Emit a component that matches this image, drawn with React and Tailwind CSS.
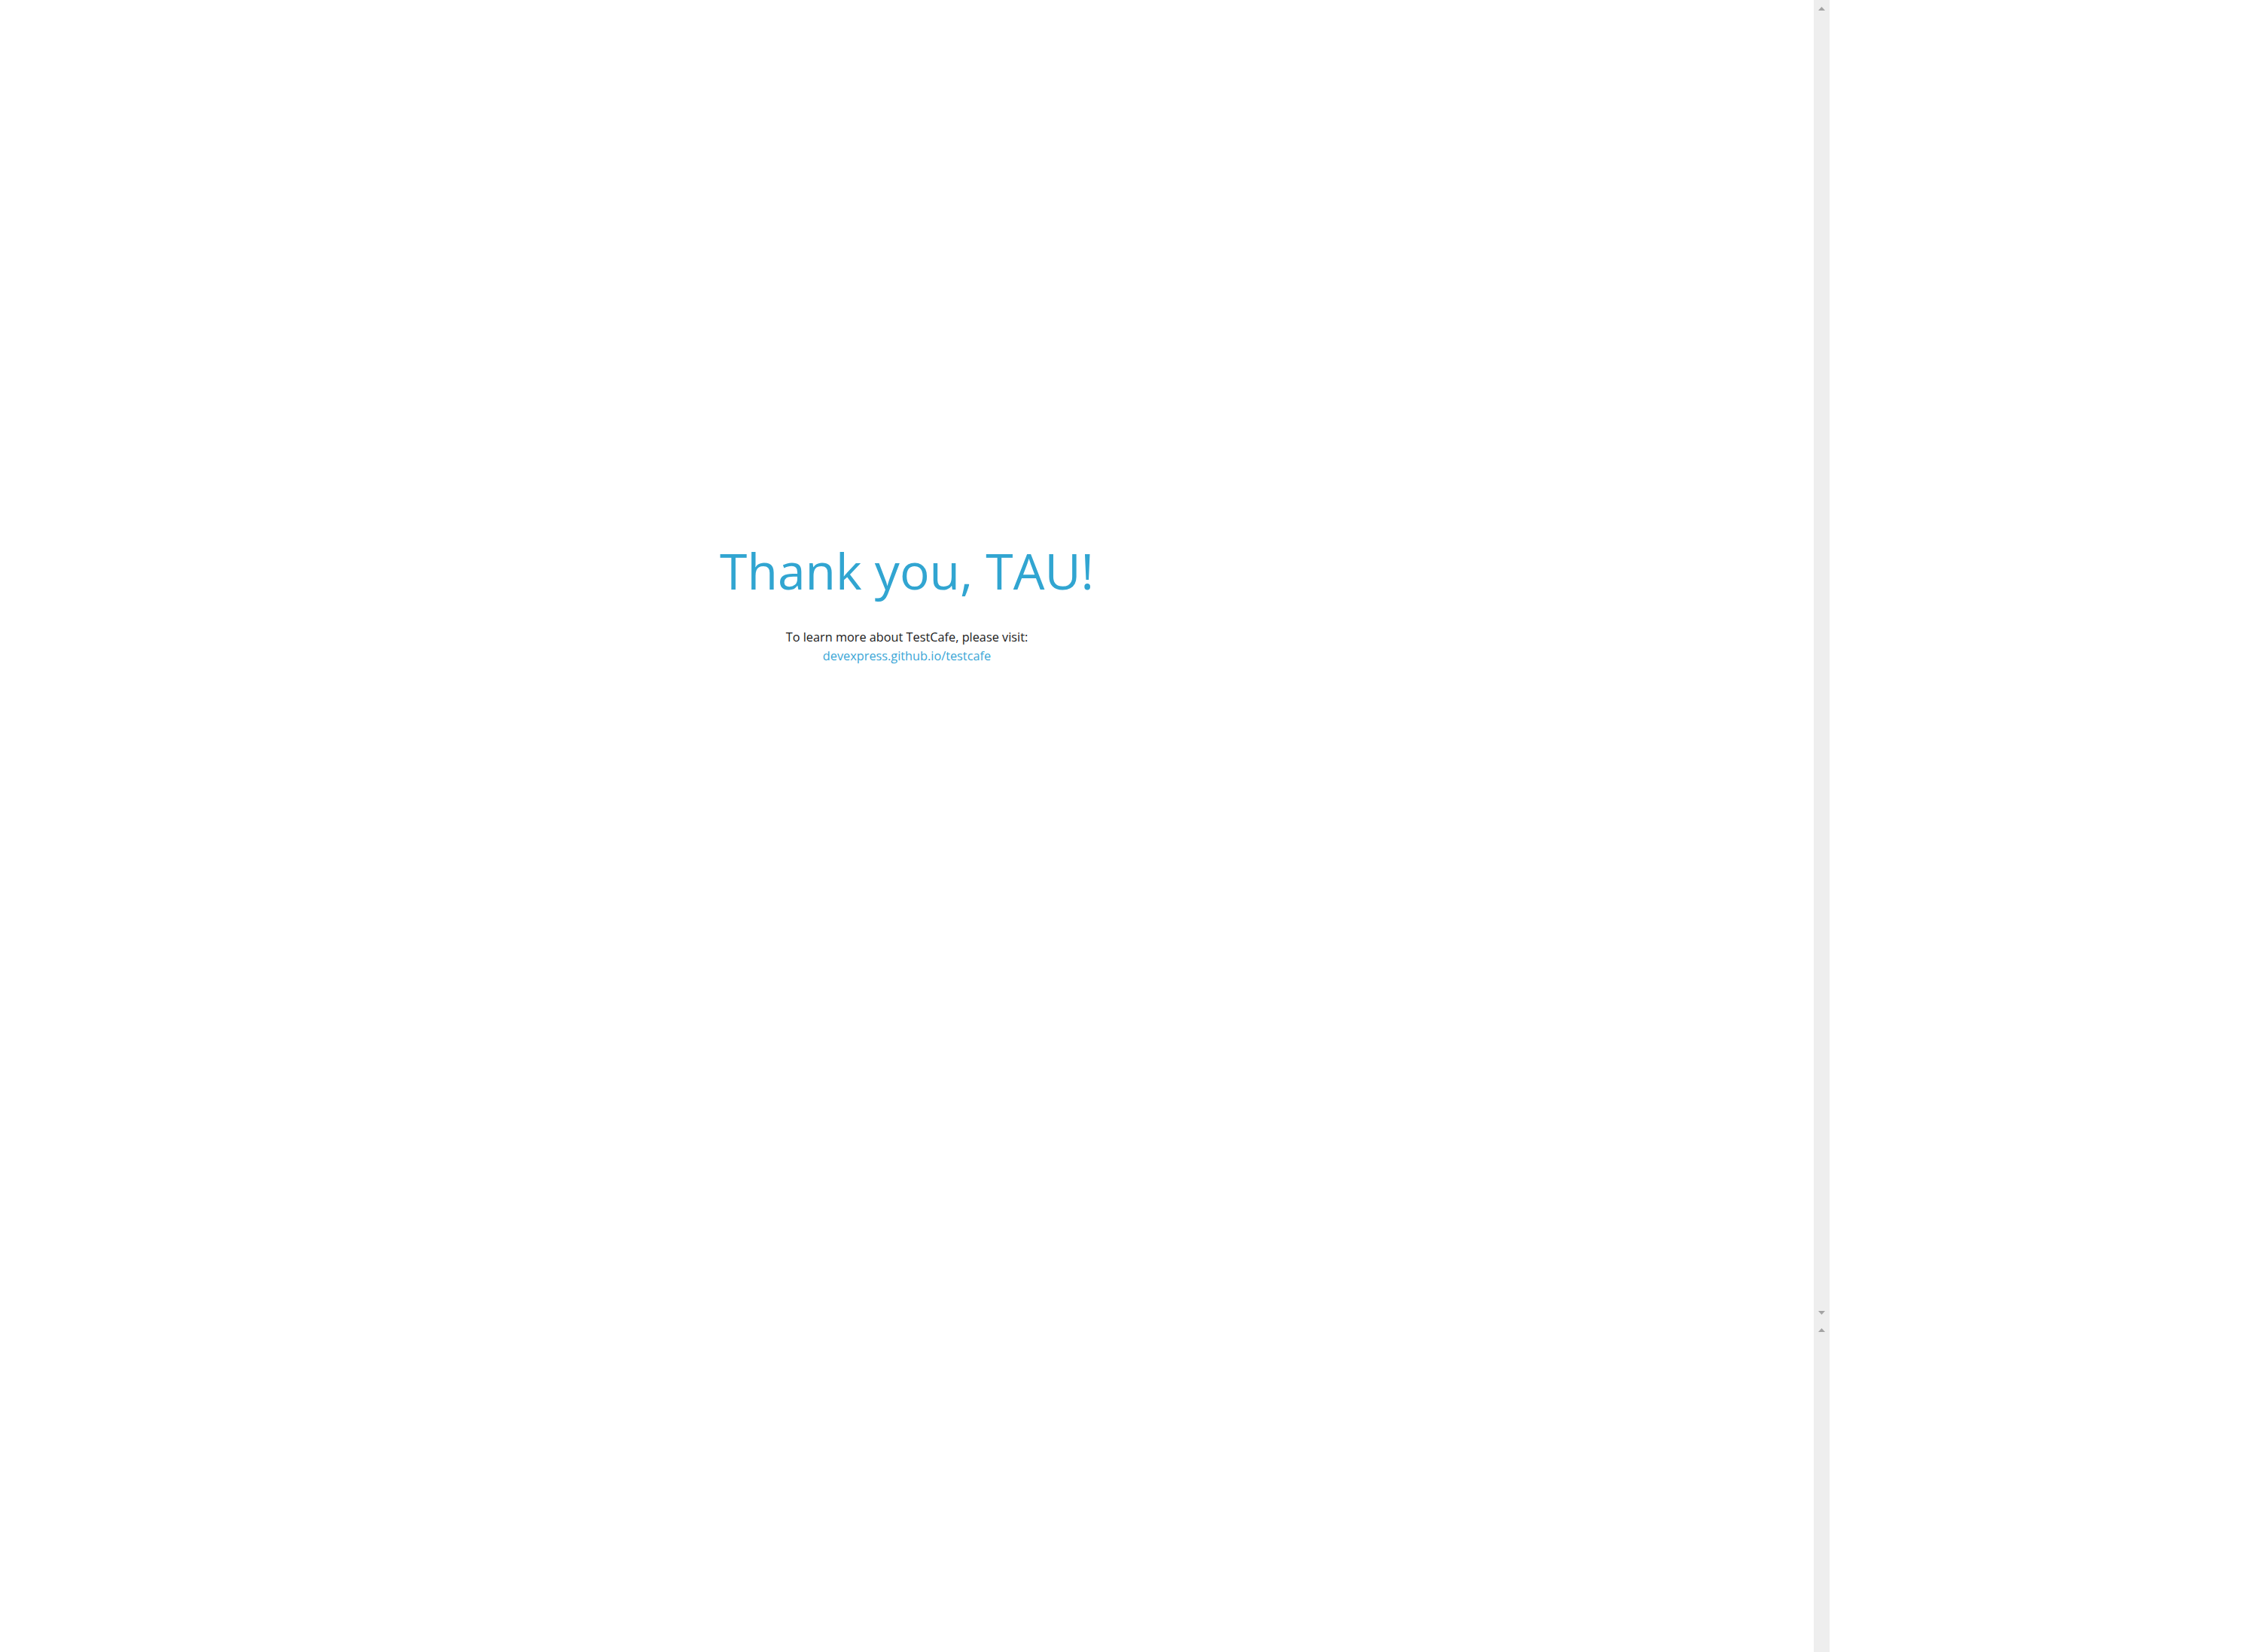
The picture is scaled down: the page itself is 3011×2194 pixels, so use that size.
const ArrowUp = () => (
  <svg width="9" height="5" viewBox="0 0 9 5" className="block">
    <polygon points="4.5,0 9,5 0,5" fill="#a3a3a3" />
  </svg>
);

const ArrowDown = () => (
  <svg width="9" height="5" viewBox="0 0 9 5" className="block">
    <polygon points="0,0 9,0 4.5,5" fill="#a3a3a3" />
  </svg>
);

const App = () => {
  return (
    <div className="flex h-[2194px] w-[3011px] overflow-hidden bg-white">
      <main
        className="flex w-[2409px] flex-col items-center pt-[713px]"
        style={{ fontFamily: '"Open Sans", "Noto Sans", sans-serif' }}
      >
        <h1 className="text-[66px] leading-[88px] font-normal text-[#31a5d1]">
          Thank you, TAU!
        </h1>
        <div className="mt-[33px] flex flex-col items-center text-[16.3px] leading-[25px]">
          <p className="text-[#1a1a1a]">
            To learn more about TestCafe, please visit:
          </p>
          <a href="#" className="text-[#3aa6d6] no-underline">
            devexpress.github.io/testcafe
          </a>
        </div>
      </main>

      {/* scrollbar strip */}
      <div className="flex h-full w-[21px] flex-col items-center bg-[#eeeeee] pt-[9px]">
        <ArrowUp />
        <div className="h-[1727px]" />
        <ArrowDown />
        <div className="h-[18px]" />
        <ArrowUp />
      </div>

      <div className="flex-1 bg-white" />
    </div>
  );
};

export default App;
